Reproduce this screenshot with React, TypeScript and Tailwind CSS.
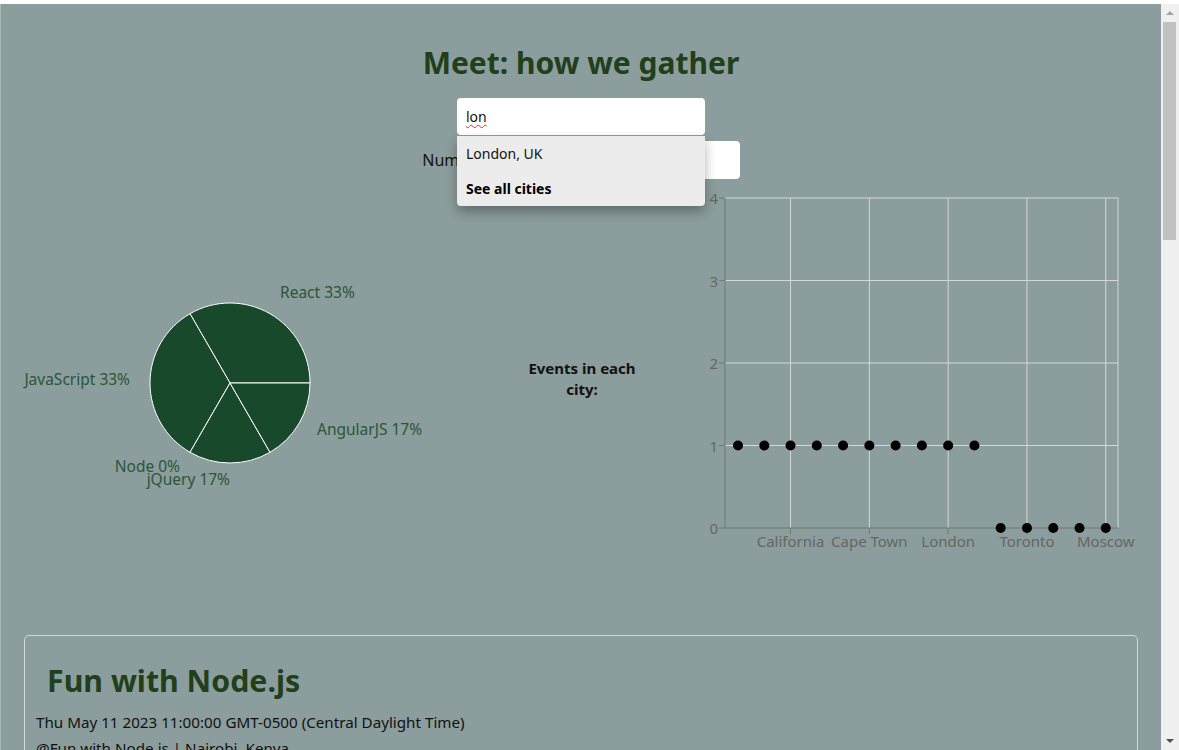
import React from "react";

const FONT = { fontFamily: '"Noto Sans", "Open Sans", sans-serif' };

function Pie() {
  const cx = 229;
  const cy = 203;
  const r = 80;
  const pt = (a: number) => {
    const rad = (a * Math.PI) / 180;
    return [cx + r * Math.cos(rad), cy - r * Math.sin(rad)];
  };
  const slices = [
    [0, 120],
    [120, 240],
    [240, 300],
    [300, 360],
  ];
  return (
    <svg width={470} height={400} className="block shrink-0">
      {slices.map(([a, b], i) => {
        const [x1, y1] = pt(a);
        const [x2, y2] = pt(b);
        return (
          <path
            key={i}
            d={`M${cx},${cy} L${x1},${y1} A${r},${r} 0 0 0 ${x2},${y2} Z`}
            fill="#18492b"
            stroke="#fff"
            strokeWidth={1}
          />
        );
      })}
      <g fill="#2b5639" fontSize={15.5}>
        <text x={279} y={112} dominantBaseline="central">React 33%</text>
        <text x={129} y={199} textAnchor="end" dominantBaseline="central">JavaScript 33%</text>
        <text x={316} y={249} dominantBaseline="central">AngularJS 17%</text>
        <text x={179} y={286} textAnchor="end" dominantBaseline="central">Node 0%</text>
        <text x={229} y={299} textAnchor="end" dominantBaseline="central">jQuery 17%</text>
      </g>
    </svg>
  );
}

function Scatter() {
  const ax = 32;
  const top = 18;
  const zero = 348;
  const step = 82.5;
  const right = 425;
  const dx = 26.27;
  const px = (i: number) => 45 + i * dx;
  const ticks = [2, 5, 8, 11, 14];
  const names = ["California", "Cape Town", "London", "Toronto", "Moscow"];
  return (
    <svg width={469} height={400} className="block shrink-0">
      <g stroke="#d3d9d8" strokeWidth={1}>
        {[4, 3, 2, 1].map((v) => (
          <line key={v} x1={ax} x2={right} y1={zero - v * step} y2={zero - v * step} />
        ))}
        {ticks.map((t) => (
          <line key={t} x1={px(t)} x2={px(t)} y1={top} y2={zero} />
        ))}
        <line x1={right} x2={right} y1={top} y2={zero} />
      </g>
      <g stroke="#6f7a79" strokeWidth={1}>
        <line x1={ax} x2={ax} y1={top} y2={zero} />
        <line x1={ax} x2={right} y1={zero} y2={zero} />
        {[0, 1, 2, 3, 4].map((v) => (
          <line key={v} x1={ax - 6} x2={ax} y1={zero - v * step} y2={zero - v * step} />
        ))}
        {ticks.map((t) => (
          <line key={t} x1={px(t)} x2={px(t)} y1={zero} y2={zero + 6} />
        ))}
      </g>
      <g fill="#666" fontSize={15}>
        {[0, 1, 2, 3, 4].map((v) => (
          <text key={v} x={ax - 7} y={zero - v * step} textAnchor="end" dominantBaseline="central">
            {v}
          </text>
        ))}
        {ticks.map((t, i) => (
          <text key={t} x={px(t)} y={zero + 13} textAnchor="middle" dominantBaseline="central">
            {names[i]}
          </text>
        ))}
      </g>
      <g fill="#000">
        {Array.from({ length: 15 }).map((_, i) => (
          <circle key={i} cx={px(i)} cy={i < 10 ? zero - step : zero} r={5} />
        ))}
      </g>
    </svg>
  );
}

export default function App() {
  return (
    <div className="w-[1179px] h-[750px] overflow-hidden flex flex-col bg-white" style={FONT}>
      <div className="h-[4px] bg-white shrink-0" />
      <div className="flex flex-1 min-h-0">
        <div className="w-[1161px] bg-[#8b9d9c] flex flex-col overflow-hidden border-l border-[#a9b7b6]">
          <h1 className="text-center text-[30px] font-bold text-[#213f1b] leading-[40px] mt-[39px]">
            Meet: how we gather
          </h1>
          <div className="flex justify-center mt-[15px]">
            <div className="relative w-[248px]">
              <div className="h-[37px] bg-white rounded-[4px] flex items-center px-[9px] text-[14px] text-[#111]">
                <span className="underline decoration-wavy decoration-[#d33] decoration-1 underline-offset-2">lon</span>
              </div>
              <div className="absolute left-0 top-[38px] w-[248px] h-[70px] bg-[#ececec] rounded-b-[4px] shadow-[0_6px_12px_rgba(0,0,0,0.3)] z-10 text-[14px] text-[#111] flex flex-col">
                <div className="h-[35px] flex items-center px-[9px]">London, UK</div>
                <div className="h-[35px] flex items-center px-[9px] font-bold text-black">See all cities</div>
              </div>
            </div>
          </div>
          <div className="flex justify-center items-center mt-[6px]">
            <span className="text-[16px] text-[#111] mr-[6px]">Number of events:</span>
            <div className="w-[172px] h-[38px] bg-white rounded-[4px]" />
          </div>
          <div className="flex items-start h-[400px] mt-[1px]">
            <Pie />
            <div className="w-[222px] shrink-0 flex justify-center pt-[178px]">
              <div className="w-[120px] text-center font-bold text-[15px] leading-[21px] text-[#111]">
                Events in each city:
              </div>
            </div>
            <Scatter />
          </div>
          <div className="mx-[23px] mt-[55px] border border-[#d0d9d8] rounded-[5px] pt-[25px] px-[11px]">
            <h2 className="text-[30.3px] font-bold text-[#213f1b] leading-[40px] pl-[11px]">Fun with Node.js</h2>
            <p className="text-[15.2px] text-[#111] mt-[10px] leading-[22px]">
              Thu May 11 2023 11:00:00 GMT-0500 (Central Daylight Time)
            </p>
            <p className="text-[15.2px] text-[#111] mt-[4px] leading-[22px]">@Fun with Node.js | Nairobi, Kenya</p>
          </div>
        </div>
        <div className="w-[18px] bg-[#f0f0f0] flex flex-col items-center shrink-0">
          <div className="h-[18px] flex items-center justify-center">
            <div className="w-0 h-0 border-l-[4px] border-r-[4px] border-b-[4px] border-l-transparent border-r-transparent border-b-[#a3a3a3]" />
          </div>
          <div className="w-[13px] h-[218px] bg-[#c1c1c1] ml-[-2px]" />
          <div className="flex-1" />
          <div className="h-[18px] flex items-center justify-center">
            <div className="w-0 h-0 border-l-[4px] border-r-[4px] border-t-[4px] border-l-transparent border-r-transparent border-t-[#505050]" />
          </div>
        </div>
      </div>
    </div>
  );
}
